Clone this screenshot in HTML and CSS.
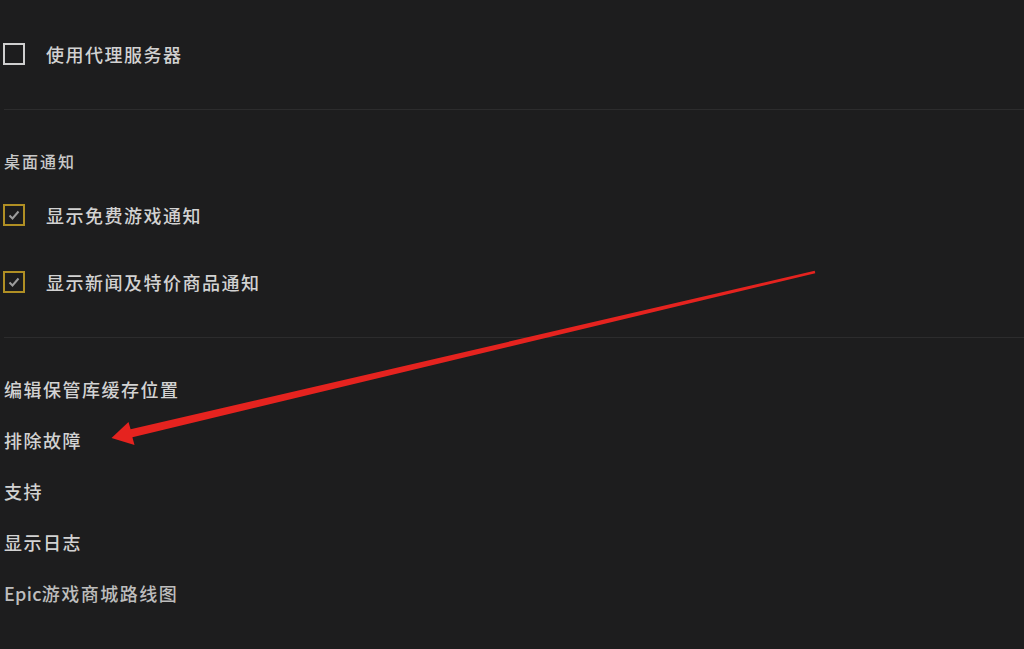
FILE: index.html
```html
<!DOCTYPE html>
<html lang="zh-CN">
<head>
<meta charset="utf-8">
<title>设置</title>
<link rel="stylesheet" href="styles.css">
</head>
<body>
<div class="page">
  <label class="check-row">
    <span class="box"></span>
    <span class="label">使用代理服务器</span>
  </label>
  <div class="divider"></div>

  <div class="heading">桌面通知</div>
  <label class="check-row">
    <span class="box checked"><svg viewBox="0 0 18 18" class="tick"><path d="M4.5 9.5 L7.5 12.5 L13.5 5.5" /></svg></span>
    <span class="label">显示免费游戏通知</span>
  </label>
  <label class="check-row">
    <span class="box checked"><svg viewBox="0 0 18 18" class="tick"><path d="M4.5 9.5 L7.5 12.5 L13.5 5.5" /></svg></span>
    <span class="label">显示新闻及特价商品通知</span>
  </label>
  <div class="divider"></div>

  <ul class="links">
    <li>编辑保管库缓存位置</li>
    <li>排除故障</li>
    <li>支持</li>
    <li>显示日志</li>
    <li class="dim"><span class="latin">Epic</span>游戏商城路线图</li>
  </ul>
</div>

<svg class="arrow" viewBox="0 0 1024 649" width="1024" height="649">
  <polygon points="111.5,438 128.5,422 130.6,429.3 814.7,270.8 815.3,273.2 132.4,437.2 134.5,445" />
</svg>
</body>
</html>
```

FILE: styles.css
```css
html, body {
  margin: 0;
  padding: 0;
  background: #1d1d1e;
}
body {
  width: 1024px;
  height: 649px;
  overflow: hidden;
  position: relative;
  font-family: "Noto Sans CJK SC", "Noto Sans", sans-serif;
  font-weight: 500;
  color: #d2d2d2;
}
.page {
  padding: 29px 0 0 4px;
}
.check-row {
  display: flex;
  align-items: center;
  height: 50px;
}
.check-row + .check-row,
.heading + .check-row {
  margin-top: 17px;
}
.box {
  width: 18px;
  height: 18px;
  border: 2px solid #cfcfcf;
  margin-left: -1px;
  display: flex;
  align-items: center;
  justify-content: center;
  box-sizing: content-box;
}
.box.checked {
  border-color: #b08f24;
}
.tick {
  width: 18px;
  height: 18px;
}
.tick path {
  fill: none;
  stroke: #9c9c9c;
  stroke-width: 2;
}
.label {
  margin-left: 21px;
  font-size: 18px;
  letter-spacing: 1.5px;
  line-height: 24px;
}
.divider {
  height: 1px;
  background: #2c2c2d;
  margin-top: 30px;
}
.heading {
  margin-top: 39px;
  font-size: 16px;
  letter-spacing: 2px;
  line-height: 24px;
  color: #c8c8c8;
}
.links {
  list-style: none;
  margin: 26px 0 0;
  padding: 0;
}
.links li {
  height: 51px;
  line-height: 51px;
  font-size: 18px;
  letter-spacing: 1.5px;
}
.links li.dim {
  color: #bdbdbd;
}
.latin {
  letter-spacing: 0.3px;
}
.arrow {
  position: absolute;
  left: 0;
  top: 0;
  pointer-events: none;
}
.arrow polygon {
  fill: #e5231f;
}
```
